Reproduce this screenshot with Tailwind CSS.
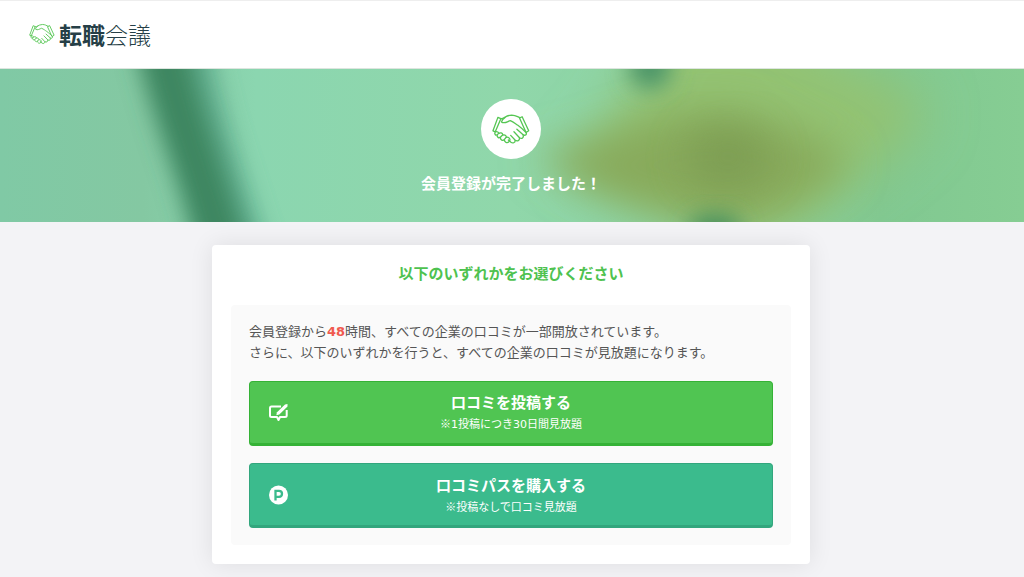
<!DOCTYPE html>
<html lang="ja">
<head>
<meta charset="utf-8">
<meta name="viewport" content="width=device-width, initial-scale=1">
<title>転職会議</title>
<script src="https://cdn.jsdelivr.net/npm/@tailwindcss/browser@4"></script>
</head>
<body class="min-h-screen bg-[#f3f3f6] font-['Noto_Sans_CJK_JP',sans-serif] text-[#555]">
<svg class="hidden">
  <symbol id="handshake" viewBox="66 70 116 91">
    <g fill="none" stroke="#55c653" stroke-linecap="round" stroke-linejoin="round">
      <path d="M84 80 L69 121 L76 124 L93 84 Z"/>
      <path d="M150 82 L158 78 L178 121 L170 126 Z"/>
      <path d="M93 84 C102 86 106 74 126 73 C138 73 144 78 151 81"/>
      <path d="M106 80 C100 84 96 88 95 94 C104 101 114 92 122 90 C132 94 137 99 145 104 C156 112 163 119 170 126 C173 133 167 137 161 133 L142 116"/>
      <path d="M161 133 C164 142 157 147 150 142 L133 124"/>
      <path d="M150 142 C151 151 143 154 137 150 L123 135"/>
      <path d="M137 150 C137 158 129 160 124 156 L116 149"/>
      <path d="M76 124 C72 131 77 136 82 133 L87 128 C84 123 80 123 76 124"/>
      <path d="M82 133 C80 140 87 145 92 140 L99 133 C98 127 91 126 87 129"/>
      <path d="M92 142 C91 149 99 153 104 147 L110 140 C109 134 103 132 99 134"/>
      <path d="M104 149 C104 156 112 159 117 155 L121 149 C121 143 115 139 110 141"/>
    </g>
  </symbol>
</svg>

<header class="flex h-[69px] items-center border-t border-b border-t-[#eee] border-b-[#dde5df] bg-white pt-px pr-7 pb-[3px] pl-[29px]">
  <a href="#" class="flex items-center gap-1 text-[23px] leading-8 text-[#263f47]" aria-label="転職会議">
    <svg class="h-6 w-[26px] stroke-[4]" aria-hidden="true"><use href="#handshake"/></svg>
    <span><b class="font-bold">転職</b><span class="font-light">会議</span></span>
  </a>
</header>

<section class="relative overflow-hidden bg-[#8ed7ad]">
  <svg class="absolute inset-0 h-full w-full" viewBox="0 0 1024 153" preserveAspectRatio="none" aria-hidden="true">
    <defs>
      <linearGradient id="base">
        <stop offset="0" stop-color="#80c9a5"/><stop offset=".14" stop-color="#84c8a2"/>
        <stop offset=".25" stop-color="#8bd6b0"/><stop offset=".5" stop-color="#90d7aa"/>
        <stop offset=".7" stop-color="#8bd0a0"/><stop offset=".86" stop-color="#81c891"/><stop offset="1" stop-color="#86cd93"/>
      </linearGradient>
      <filter id="b8" x="-60%" y="-60%" width="220%" height="220%"><feGaussianBlur stdDeviation="11"/></filter>
      <filter id="b16" x="-50%" y="-60%" width="200%" height="220%"><feGaussianBlur stdDeviation="20"/></filter>
      <filter id="b28" x="-50%" y="-60%" width="200%" height="220%"><feGaussianBlur stdDeviation="26"/></filter>
    </defs>
    <rect width="1024" height="153" fill="url(#base)"/>
    <path d="M665 -60 L790 -60 C820 0 930 10 925 50 C900 85 840 120 780 165 L720 170 C670 125 600 115 570 92 C600 70 625 40 665 -60Z" fill="#93c272" filter="url(#b28)"/>
    <path d="M535 85 C600 76 650 40 720 42 C790 52 830 75 850 93 C810 135 760 160 700 152 C650 142 580 125 535 85Z" fill="#88aa5c" filter="url(#b16)"/>
    <ellipse cx="728" cy="88" rx="42" ry="30" fill="#789850" opacity=".7" filter="url(#b16)"/>
    <ellipse cx="650" cy="-2" rx="21" ry="22" fill="#4c9468" filter="url(#b8)"/>
    <ellipse cx="715" cy="161" rx="27" ry="16" fill="#478f5c" filter="url(#b8)"/>
    <path d="M170 -40 L208 -40 C218 30 238 90 272 190 L225 190 C200 100 180 50 170 -40Z" fill="#5aa88a" opacity=".8" filter="url(#b8)"/>
    <path d="M132 -40 L186 -40 C196 30 223 90 252 190 L198 190 C178 100 150 50 132 -40Z" fill="#3d8660" filter="url(#b8)"/>
  </svg>
  <div class="relative flex flex-col items-center pt-[30px] pr-0.5 pb-[29px]">
    <div class="flex size-[60px] items-center justify-center rounded-full bg-white">
      <svg class="h-8 w-[38px] stroke-[4]" aria-hidden="true"><use href="#handshake"/></svg>
    </div>
    <h1 class="mt-[14px] text-[15px] leading-5 font-bold text-white">会員登録が完了しました！</h1>
  </div>
</section>

<main class="pt-[23px] pr-0.5 pb-3">
  <section class="mx-auto max-w-[598px] rounded bg-white px-[19px] pt-[18px] pb-[19px] shadow-[0_0_24px_rgba(0,0,0,0.09)]">
    <h2 class="text-center text-[15px] leading-5 font-bold text-[#4ec24f]">以下のいずれかをお選びください</h2>
    <div class="mt-[22px] rounded bg-[#fafafa] px-[18px] pt-4 pb-[17px]">
      <p class="text-[13px] leading-5">会員登録から<b class="font-['DejaVu_Sans',sans-serif] font-bold text-[#f0594f]">48</b>時間、すべての企業の口コミが一部開放されています。<br>さらに、以下のいずれかを行うと、すべての企業の口コミが見放題になります。</p>
      <div class="mt-[19px] flex flex-col gap-[17px]">
        <button type="button" class="grid h-[65px] w-full grid-cols-[20px_1fr_20px] items-center rounded border border-b-[3px] border-[#35b236] bg-[#50c552] px-[18px] text-white">
          <svg class="size-5" viewBox="0 0 20 20" fill="none" aria-hidden="true">
            <path d="M13 3.500 H3.500 Q2 3.500 2 5 V12.500 Q2 14 3.500 14 H9 L10.500 17 L12 14 H17 Q18.700 14 18.700 12.500 V7" stroke="#fff" stroke-width="2" stroke-linejoin="round"/>
            <path d="M8.300 12.300 L9 9.300 L17 1.500 L19.500 1 L19.500 3.500 L11.300 11.500 Z" fill="#fff"/>
          </svg>
          <span class="flex flex-col items-center">
            <span class="text-[15px] leading-[22px] font-bold">口コミを投稿する</span>
            <span class="text-[11px] leading-5">※<span class="font-['DejaVu_Sans',sans-serif]">1</span>投稿につき<span class="font-['DejaVu_Sans',sans-serif]">30</span>日間見放題</span>
          </span>
        </button>
        <button type="button" class="grid h-[65px] w-full grid-cols-[20px_1fr_20px] items-center rounded border border-b-[3px] border-[#32a67d] bg-[#3bbb8d] px-[18px] text-white">
          <svg class="size-5" viewBox="0 0 20 20" aria-hidden="true">
            <circle cx="10.500" cy="10" r="9.500" fill="#fff"/>
            <path d="M7.500 15.500 V5.800 H11 C15 5.800 15 11.800 11 11.800 H7.500" fill="none" stroke="#3bbb8d" stroke-width="2.300"/>
          </svg>
          <span class="flex flex-col items-center">
            <span class="text-[15px] leading-[22px] font-bold">口コミパスを購入する</span>
            <span class="text-[11px] leading-5">※投稿なしで口コミ見放題</span>
          </span>
        </button>
      </div>
    </div>
  </section>
</main>
</body>
</html>
